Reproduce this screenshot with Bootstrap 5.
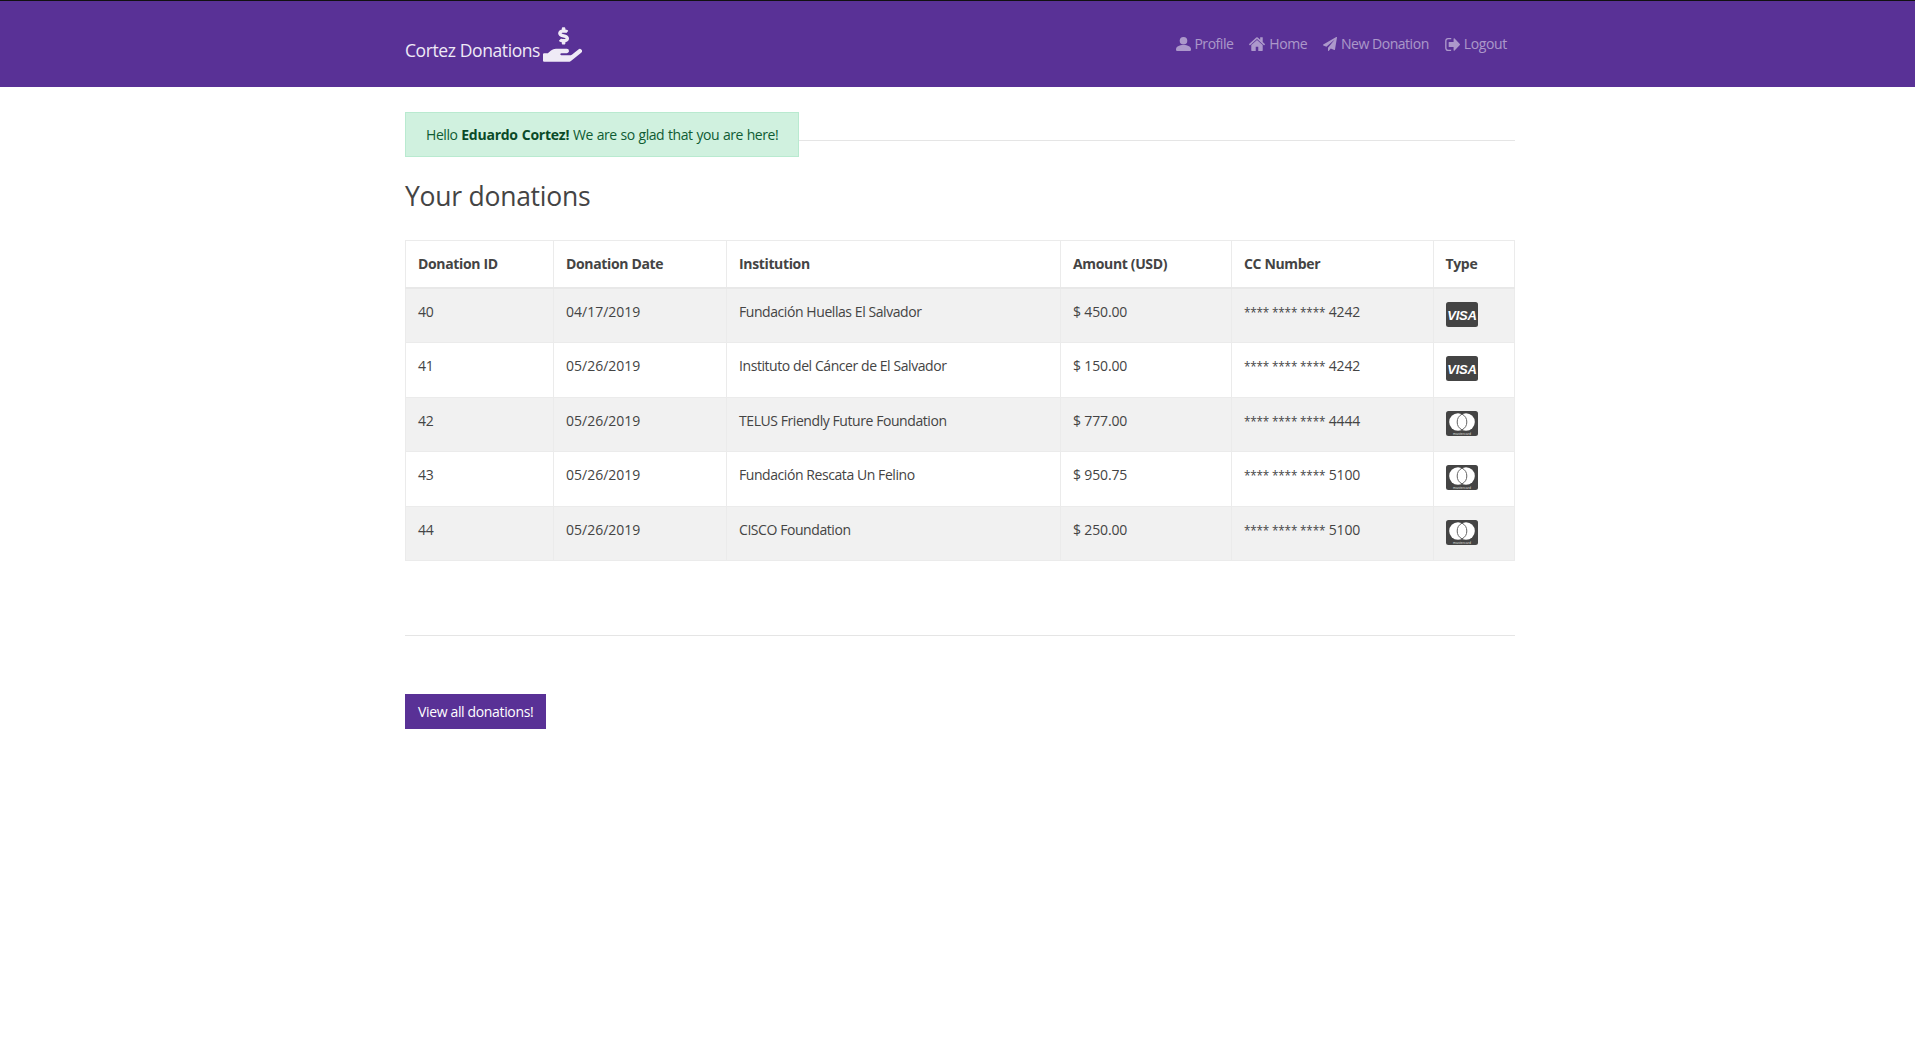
<!DOCTYPE html>
<html lang="en">
<head>
<meta charset="utf-8">
<title>Cortez Donations</title>
<link rel="stylesheet" href="https://cdn.jsdelivr.net/npm/bootstrap@5.3.0/dist/css/bootstrap.min.css">
<style>
body{font-family:"Open Sans","Noto Sans",sans-serif;font-size:14px;color:#444;letter-spacing:-.25px;background:#fff}
.topbar{background:#593196;border-top:1px solid #111;height:87px}
.page-box{width:1110px;margin-left:405px}
.brand-text{color:#efeaf6;font-size:17.5px;line-height:24px;margin-top:12px;letter-spacing:-.4px}
.brand-icon{width:39px;height:35px;margin-left:3px;fill:#efeaf6}
.top-link{color:rgba(255,255,255,.5);text-decoration:none;font-size:14px;display:flex;align-items:center;padding:0 8px 0 0;margin-right:8px;line-height:20px;letter-spacing:-.47px}
.top-link:last-child{margin-right:0;letter-spacing:-.35px}
.top-link svg{fill:rgba(255,255,255,.5);margin-right:4px;flex:none}
.top-link svg.ic-user{margin-right:3px}
.ic-user{width:15px;height:14px}
.ic-home{width:16px;height:14px}
.ic-plane{width:14px;height:14px}
.ic-out{width:15px;height:13px}
.hello-row{margin-top:25px}
.hello-box{background:#d0f1df;border:1px solid #b9ead0;color:#0f5c33;height:45px;padding:0 20px;display:flex;align-items:center;border-radius:0;margin:0;white-space:nowrap;letter-spacing:-.44px;word-spacing:.6px}
.hello-box b{color:#0a4a28;letter-spacing:-.25px}
.hr-line{border:0;border-top:1px solid #e5e5e5;opacity:1;margin:0}
.hello-row .hr-line{margin-top:28px}
.page-title{font-size:26.5px;font-weight:400;color:#444;line-height:32px;margin:23px 0 0;letter-spacing:-.25px}
.gift-table{table-layout:fixed;width:1109px;margin:28px 0 0;--bs-table-color:#444;--bs-table-border-color:#ebebeb;--bs-table-striped-bg:#f1f1f1;--bs-table-striped-color:#444;border-color:#ebebeb}
.gift-table th,.gift-table td{padding:12px;line-height:22px;vertical-align:top;font-weight:400}
.gift-table thead th{font-weight:700;border-bottom:2px solid #e8e8e8;padding:12px;height:47px;letter-spacing:-.35px}
.gift-table tbody td{height:54.6px}
.c1{width:148px}.c2{width:173px}.c3{width:334px}.c4{width:171px}.c5{width:201.5px}.c6{width:81.5px}
.gift-table td.cc-cell{padding-top:13px;padding-bottom:0}
.gift-table td.num-cell{letter-spacing:0}
.gift-table td.org-cell{letter-spacing:-.43px}
.gift-table td.usd-cell{letter-spacing:-.15px}
.gift-table td.card-cell{letter-spacing:-.15px}
.mask-run{font-size:11.7px}
.cc-ic{display:block;width:32px;height:25px}
.bottom-rule{margin-top:74px}
.cta{background:#593196;border:0;border-radius:0;color:#fff;font-size:14px;padding:0 13px;height:35px;line-height:35px;margin-top:58px;letter-spacing:-.35px}
.cta:hover{background:#4a2880;color:#fff}
.cc-word{font-family:"Liberation Sans",sans-serif;font-weight:700;font-style:italic;font-size:13px;fill:#fff;letter-spacing:-.2px}
.cc-tiny{font-family:"Liberation Sans",sans-serif;font-size:3.6px;fill:#ddd;letter-spacing:0}
</style>
</head>
<body>
<nav class="topbar">
  <div class="page-box d-flex justify-content-between align-items-center h-100">
    <a class="d-flex align-items-center text-decoration-none" href="#">
      <span class="brand-text">Cortez Donations</span>
      <svg class="brand-icon" viewBox="0 0 576 512"><path d="M271.06,144.3l54.27,14.3a8.59,8.59,0,0,1,6.63,8.1c0,4.6-4.09,8.4-9.12,8.4h-35.6a30,30,0,0,1-11.19-2.2c-5.24-2.2-11.28-1.7-15.3,2l-19,17.5a11.68,11.68,0,0,0-2.25,2.66,11.42,11.42,0,0,0,3.88,15.74,83.77,83.77,0,0,0,34.51,11.5V240c0,8.8,7.83,16,17.37,16h17.37c9.55,0,17.38-7.2,17.38-16V222.4c32.93-3.6,57.84-31,53.5-63-3.15-23-22.46-41.3-46.56-47.7L282.68,97.4a8.59,8.59,0,0,1-6.63-8.1c0-4.6,4.09-8.4,9.12-8.4h35.6A30,30,0,0,1,332,83.1c5.23,2.2,11.28,1.7,15.3-2l19-17.5A11.31,11.31,0,0,0,368.57,61a11.43,11.43,0,0,0-3.84-15.78,83.82,83.82,0,0,0-34.52-11.5V16c0-8.8-7.82-16-17.37-16H295.47C285.92,0,278.1,7.2,278.1,16V33.6c-32.89,3.6-57.85,31-53.51,63C227.74,119.6,247,137.9,271.06,144.3ZM565.27,328.1c-11.8-10.7-30.2-10-42.6,0L430.27,402a63.64,63.64,0,0,1-40,14H272a16,16,0,0,1,0-32h78.29c15.9,0,30.71-10.9,33.25-26.6a31.2,31.2,0,0,0,.46-5.46A32,32,0,0,0,352,320H192a117.66,117.66,0,0,0-74.1,26.29L71.4,384H16A16,16,0,0,0,0,400v96a16,16,0,0,0,16,16H372.77a64,64,0,0,0,40-14L564,377a32,32,0,0,0,1.28-48.9Z"/></svg>
    </a>
    <div class="d-flex">
      <a class="top-link" href="#"><svg class="ic-user" viewBox="0 0 15 14"><circle cx="7.500" cy="3.800" r="3.800"/><path d="M0 12.500C0 9.500 3 8 7.500 8S15 9.500 15 12.500c0 1-.6 1.500-1.500 1.500h-12C.6 14 0 13.500 0 12.500z"/></svg>Profile</a>
      <a class="top-link" href="#"><svg class="ic-home" preserveAspectRatio="none" viewBox="90 230 1612 1310"><path d="M1472 992v480q0 26-19 45t-45 19h-384v-384h-256v384h-384q-26 0-45-19t-19-45v-480q0-1 .5-3t.5-3l575-474 575 474q1 2 1 6zm223-69l-62 74q-8 9-21 11h-3q-13 0-21-7l-692-577-692 577q-12 8-24 7-13-2-21-11l-62-74q-8-10-7-23.500t11-21.500l719-599q32-26 76-26t76 26l244 204v-195q0-14 9-23t23-9h192q14 0 23 9t9 23v408l219 182q10 8 11 21.500t-7 23.500z"/></svg>Home</a>
      <a class="top-link" href="#"><svg class="ic-plane" viewBox="0 0 1792 1792"><path d="M1764 11q33 24 27 64l-256 1536q-5 29-32 45-14 8-31 8-11 0-24-5l-453-185-242 295q-18 23-49 23-13 0-22-4-19-7-30.500-23.500t-11.500-36.500v-349l864-1059-1069 925-395-162q-37-14-40-55-2-40 32-59l1664-960q15-9 32-9 20 0 36 11z"/></svg>New Donation</a>
      <a class="top-link" href="#"><svg class="ic-out" preserveAspectRatio="none" viewBox="64 256 1568 1280"><path d="M704 1440q0 4 1 20t.5 26.500-1.500 23.500-5.500 19.500-11.500 6.500h-320q-119 0-203.500-84.500t-84.500-203.500v-704q0-119 84.500-203.500t203.500-84.500h320q13 0 22.500 9.500t9.500 22.500q0 4 1 20t.5 26.500-1.500 23.500-5.500 19.500-11.500 6.500h-320q-66 0-113 47t-47 113v704q0 66 47 113t113 47h312l11.500 1 11.500 3 8 5.500 7 9 2 13.500zm928-544q0 26-19 45l-544 544q-19 19-45 19t-45-19-19-45v-288h-448q-26 0-45-19t-19-45v-384q0-26 19-45t45-19h448v-288q0-26 19-45t45-19 45 19l544 544q19 19 19 45z"/></svg>Logout</a>
    </div>
  </div>
</nav>
<main class="page-box">
  <div class="d-flex align-items-start hello-row">
    <div class="hello-box">Hello&nbsp;<b>Eduardo Cortez!</b>&nbsp;We are so glad that you are here!</div>
    <hr class="hr-line flex-grow-1">
  </div>
  <h3 class="page-title">Your donations</h3>
  <table class="table table-bordered table-striped gift-table">
    <colgroup><col class="c1"><col class="c2"><col class="c3"><col class="c4"><col class="c5"><col class="c6"></colgroup>
    <thead><tr><th>Donation ID</th><th>Donation Date</th><th>Institution</th><th>Amount (USD)</th><th>CC Number</th><th>Type</th></tr></thead>
    <tbody>
      <tr><td>40</td><td class="num-cell">04/17/2019</td><td class="org-cell">Fundación Huellas El Salvador</td><td class="usd-cell">$ 450.00</td><td class="card-cell"><span class="mask-run">**** **** ****</span> 4242</td><td class="cc-cell"><svg class="cc-ic" viewBox="0 0 32 25"><rect width="32" height="25" rx="2.500" fill="#444"/><text x="16" y="17.500" text-anchor="middle" class="cc-word">VISA</text></svg></td></tr>
      <tr><td>41</td><td class="num-cell">05/26/2019</td><td class="org-cell">Instituto del Cáncer de El Salvador</td><td class="usd-cell">$ 150.00</td><td class="card-cell"><span class="mask-run">**** **** ****</span> 4242</td><td class="cc-cell"><svg class="cc-ic" viewBox="0 0 32 25"><rect width="32" height="25" rx="2.500" fill="#444"/><text x="16" y="17.500" text-anchor="middle" class="cc-word">VISA</text></svg></td></tr>
      <tr><td>42</td><td class="num-cell">05/26/2019</td><td class="org-cell">TELUS Friendly Future Foundation</td><td class="usd-cell">$ 777.00</td><td class="card-cell"><span class="mask-run">**** **** ****</span> 4444</td><td class="cc-cell"><svg class="cc-ic" viewBox="0 0 32 25"><rect width="32" height="25" rx="2.500" fill="#444"/><circle cx="12" cy="11" r="8.800" fill="#fff"/><circle cx="20" cy="11" r="8.800" fill="#fff"/><path d="M16 3.160A8.800 8.800 0 0 1 16 18.840A8.800 8.800 0 0 1 16 3.160z" fill="#fff" stroke="#666" stroke-width="1"/><text x="16" y="23.500" text-anchor="middle" class="cc-tiny">mastercard</text></svg></td></tr>
      <tr><td>43</td><td class="num-cell">05/26/2019</td><td class="org-cell">Fundación Rescata Un Felino</td><td class="usd-cell">$ 950.75</td><td class="card-cell"><span class="mask-run">**** **** ****</span> 5100</td><td class="cc-cell"><svg class="cc-ic" viewBox="0 0 32 25"><rect width="32" height="25" rx="2.500" fill="#444"/><circle cx="12" cy="11" r="8.800" fill="#fff"/><circle cx="20" cy="11" r="8.800" fill="#fff"/><path d="M16 3.160A8.800 8.800 0 0 1 16 18.840A8.800 8.800 0 0 1 16 3.160z" fill="#fff" stroke="#666" stroke-width="1"/><text x="16" y="23.500" text-anchor="middle" class="cc-tiny">mastercard</text></svg></td></tr>
      <tr><td>44</td><td class="num-cell">05/26/2019</td><td class="org-cell">CISCO Foundation</td><td class="usd-cell">$ 250.00</td><td class="card-cell"><span class="mask-run">**** **** ****</span> 5100</td><td class="cc-cell"><svg class="cc-ic" viewBox="0 0 32 25"><rect width="32" height="25" rx="2.500" fill="#444"/><circle cx="12" cy="11" r="8.800" fill="#fff"/><circle cx="20" cy="11" r="8.800" fill="#fff"/><path d="M16 3.160A8.800 8.800 0 0 1 16 18.840A8.800 8.800 0 0 1 16 3.160z" fill="#fff" stroke="#666" stroke-width="1"/><text x="16" y="23.500" text-anchor="middle" class="cc-tiny">mastercard</text></svg></td></tr>
    </tbody>
  </table>
  <hr class="hr-line bottom-rule">
  <a class="btn cta" href="#">View all donations!</a>
</main>
</body>
</html>
